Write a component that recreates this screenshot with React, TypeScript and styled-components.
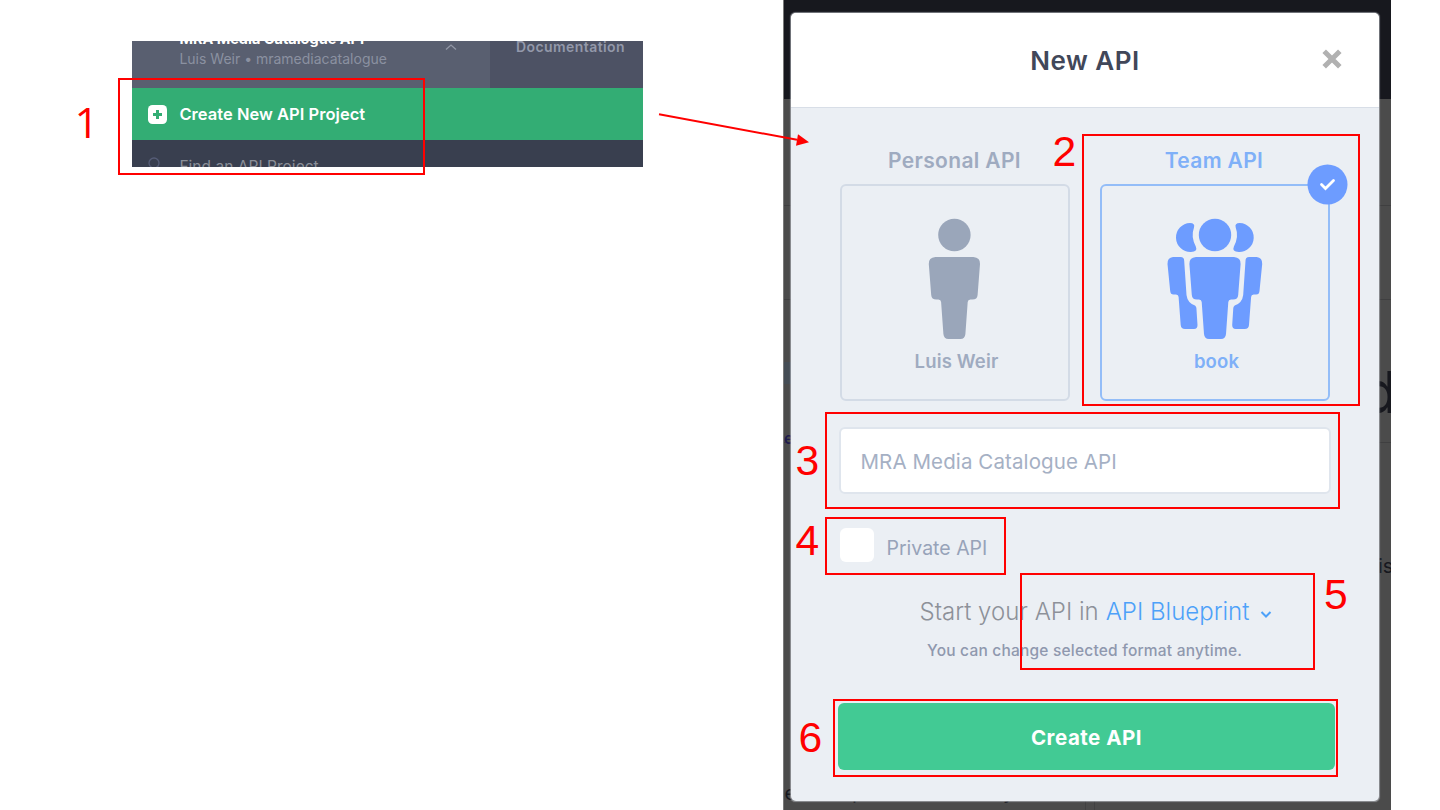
import React from "react";
import styled, { createGlobalStyle } from "styled-components";

const Global = createGlobalStyle`
  *, *::before, *::after { box-sizing: border-box; }
  body { margin: 0; background: #fff; font-family: Inter, "Liberation Sans", sans-serif; }
  h2, p { margin: 0; }
`;

const Slide = styled.main`
  position: relative;
  display: flex;
  align-items: flex-start;
  width: 1440px;
  height: 810px;
  overflow: hidden;
  background: #fff;
`;

/* ---------- Project menu ---------- */

const Menu = styled.section`
  display: flex;
  flex-direction: column;
  width: 511px;
  height: 126px;
  margin: 41px 139.600px 0 132.400px;
  overflow: hidden;
  flex: none;
`;

const MenuHeader = styled.div`
  display: flex;
  height: 47px;
  flex: none;
  overflow: hidden;
`;

const CurrentProject = styled.div`
  display: flex;
  justify-content: space-between;
  width: 357.600px;
  padding: 0 33px 0 47px;
  background: #595f70;
`;

const ProjectText = styled.div`
  display: flex;
  flex-direction: column;
  margin-top: -12.500px;
  white-space: nowrap;
`;

const ProjectName = styled.span`
  font-size: 14.5px;
  line-height: 20px;
  font-weight: 700;
  color: #fff;
`;

const ProjectOwner = styled.span`
  font-size: 14px;
  line-height: 20px;
  color: #8b91a1;
`;

const DocsTab = styled.div`
  flex: 1;
  padding: 0 0 0 26px;
  background: #4d5264;
`;

const DocsLabel = styled.span`
  display: block;
  width: max-content;
  margin-top: -4px;
  font-size: 14px;
  line-height: 20px;
  font-weight: 600;
  letter-spacing: 0.42px;
  color: #9398aa;
`;

const MenuItem = styled.div<{ $active?: boolean }>`
  display: flex;
  align-items: center;
  flex: none;
  height: 52px;
  padding-left: 16px;
  gap: 12px;
  font-size: ${(p) => (p.$active ? 16.5 : 15.5)}px;
  font-weight: ${(p) => (p.$active ? 600 : 400)};
  letter-spacing: 0.03px;
  color: ${(p) => (p.$active ? "#fff" : "#8b8f98")};
  background: ${(p) => (p.$active ? "#33ad74" : "#393f4f")};
  white-space: nowrap;
`;

const ItemIcon = styled.svg`
  width: 19px;
  height: 19px;
  flex: none;
`;

const Chevron = styled.svg`
  width: 12px;
  height: 12px;
  flex: none;
`;

const FormatChevron = styled(Chevron)`
  margin: 5px 0 0 4px;
`;

/* ---------- Dimmed page behind the dialog ---------- */

const Shot = styled.section`
  display: grid;
  width: 608px;
  height: 810px;
  overflow: hidden;
  flex: none;
`;

const Page = styled.div`
  position: relative;
  grid-area: 1 / 1;
  display: flex;
  flex-direction: column;
  background: #4b4b4b;
  overflow: hidden;
  border-left: 1px solid #7a7a7a;
`;

const TopBar = styled.div`
  height: 99px;
  background: #17181e;
  flex: none;
`;

const Band = styled.div<{ $h: number }>`
  height: ${(p) => p.$h}px;
  border-bottom: 1px solid #3f3f40;
  flex: none;
`;

const Highlight = styled.div`
  position: absolute;
  left: 0;
  top: 362px;
  width: 300px;
  height: 22px;
  background: #454d55;
`;

const Snippet = styled.span<{ $x: number; $base: number; $size: number; $w?: number; $c?: string }>`
  position: absolute;
  left: ${(p) => p.$x}px;
  top: ${(p) => p.$base - p.$size * 0.864}px;
  font-size: ${(p) => p.$size}px;
  line-height: 1;
  font-weight: ${(p) => p.$w ?? 400};
  color: ${(p) => p.$c ?? "#17181e"};
`;

const Footer = styled.div`
  display: flex;
  flex: 1;
  padding-left: 301px;
`;

const Gutter = styled.div`
  width: 10px;
  border: solid #414142;
  border-width: 0 1px;
`;

/* ---------- Dialog ---------- */

const Dialog = styled.div`
  position: relative;
  grid-area: 1 / 1;
  display: flex;
  flex-direction: column;
  width: 588px;
  height: 788px;
  margin: 13px 0 0 8px;
  border-radius: 5px;
  background: #ebeff4;
  overflow: hidden;
  box-shadow: 0 0 1px 0.5px rgba(190, 194, 200, 0.6);
`;

const DialogHeader = styled.header`
  display: grid;
  grid-template-columns: 94px 1fr 94px;
  align-items: center;
  justify-items: center;
  height: 95px;
  flex: none;
  background: #fff;
  border-bottom: 1px solid #d8dee7;
`;

const Title = styled.h2`
  grid-column: 2;
  margin-top: 2px;
  font-size: 26px;
  line-height: 32px;
  font-weight: 600;
  letter-spacing: 0.5px;
  color: #414759;
`;

const Close = styled.svg`
  width: 20px;
  height: 20px;
  margin-top: -3px;
`;

const Body = styled.div`
  display: flex;
  flex-direction: column;
  padding: 38px 44px 0 48px;
`;

const Owners = styled.div`
  display: flex;
  gap: 30px;
  margin-left: 1px;
`;

const Owner = styled.div<{ $on?: boolean }>`
  position: relative;
  display: flex;
  flex-direction: column;
  align-items: center;
  width: 230px;
  color: ${(p) => (p.$on ? "#7fb0f8" : "#9fabc0")};
`;

const OwnerLabel = styled.span<{ $shift?: number }>`
  height: 38px;
  padding-top: 1px;
  margin-left: ${(p) => p.$shift ?? 0}px;
  font-size: 21px;
  line-height: 28px;
  font-weight: 600;
  letter-spacing: 0.35px;
`;

const Card = styled.div<{ $on?: boolean }>`
  display: flex;
  flex-direction: column;
  align-items: center;
  width: 230px;
  height: 217px;
  padding-top: 32px;
  border: 2px solid ${(p) => (p.$on ? "#93bdf8" : "#d3dbe6")};
  border-radius: 6px;
`;

const Figure = styled.svg`
  width: 96px;
  height: 122px;
  flex: none;
`;

const CardName = styled.span`
  margin: 9px 0 0 3px;
  font-size: 18.5px;
  line-height: 24px;
  font-weight: 600;
  letter-spacing: 0.15px;
`;

const Badge = styled.svg`
  position: absolute;
  right: -18px;
  top: 18px;
  width: 41px;
  height: 41px;
`;

const NameField = styled.div`
  display: flex;
  align-items: center;
  width: 492px;
  height: 67px;
  margin-top: 26px;
  padding: 2px 0 0 19.500px;
  border: 2px solid #dfe5ed;
  border-radius: 6px;
  background: #fff;
  font-size: 20.5px;
  letter-spacing: 0.1px;
  color: #a5b0c4;
`;

const PrivateRow = styled.div`
  display: flex;
  align-items: center;
  gap: 12.500px;
  height: 34px;
  margin: 34px 0 0 1px;
`;

const CheckBox = styled.span`
  width: 34px;
  height: 34px;
  border-radius: 6px;
  background: #fff;
`;

const PrivateLabel = styled.span`
  padding-top: 5px;
  font-size: 19.5px;
  color: #97a3b9;
`;

const FormatRow = styled.div`
  display: flex;
  align-items: center;
  height: 32px;
  margin: 33px 0 0 80.500px;
  gap: 7px;
  font-size: 24px;
  font-weight: 300;
  color: #8d9199;
  white-space: nowrap;
`;

const FormatLink = styled.span`
  color: #4da1f9;
`;

const Hint = styled.p`
  margin: 13px 0 0 88px;
  font-size: 15.5px;
  line-height: 22px;
  font-weight: 500;
  letter-spacing: 0.21px;
  color: #8f98ae;
  white-space: nowrap;
`;

const Submit = styled.div`
  display: flex;
  align-items: center;
  justify-content: center;
  height: 67px;
  margin-top: 41px;
  margin-left: -1px;
  padding-top: 1px;
  border-radius: 6px;
  background: #42ca94;
  color: #fff;
  font-size: 20.5px;
  font-weight: 700;
  letter-spacing: 0.5px;
`;

/* ---------- Annotations ---------- */

const Mark = styled.div<{ $x: number; $y: number; $w: number; $h: number }>`
  position: absolute;
  left: ${(p) => p.$x}px;
  top: ${(p) => p.$y}px;
  width: ${(p) => p.$w}px;
  height: ${(p) => p.$h}px;
  border: 2px solid #f00;
`;

const Num = styled.span<{ $x: number; $base: number }>`
  position: absolute;
  left: ${(p) => p.$x}px;
  top: ${(p) => p.$base - 36}px;
  font-family: "Liberation Sans", Arial, sans-serif;
  font-size: 42.67px;
  line-height: 1;
  color: #f00;
`;

/* Open Sans has a "1" without a foot */
const NumOne = styled(Num)`
  margin-top: -2px;
  font-family: "Open Sans", sans-serif;
`;

const Arrow = styled.svg`
  position: absolute;
  left: 650px;
  top: 105px;
  width: 170px;
  height: 50px;
`;

const marks = [
  { n: 1, box: [118, 78, 307, 97], at: [74.5, 139] },
  { n: 2, box: [1082, 134, 278, 272], at: [1052.5, 166] },
  { n: 3, box: [824.7, 412, 515, 97], at: [795.5, 475] },
  { n: 4, box: [824.7, 517, 181, 58], at: [795.5, 555] },
  { n: 5, box: [1020, 573, 295, 97], at: [1324, 609] },
  { n: 6, box: [833, 698.5, 504.5, 78.5], at: [798.5, 752] },
];

const bodyPath =
  "M29 39H67Q73.9 39.5 73.6 46L71.2 77Q70.9 81.5 66 81.5H64Q61.5 81.8 61.3 84L59 116Q58.5 121 54 121H42Q37.5 121 37 116L34.7 84Q34.5 81.8 32 81.5H30Q25.1 81.5 24.8 77L22.4 46Q22.1 39.5 29 39Z";

const sideHead =
  "M23 5Q28.3 5 27 9.5Q23.6 18.5 28.8 28.5Q31 33.5 24 34A14.5 14.5 0 0 1 23 5Z";
const sideBody =
  "M6 39H13.5Q17.3 39 17.2 43L19.5 77Q20.5 85 28 87.5Q29.3 88.5 29.4 90L30.5 107Q30.5 111 27 111H18Q14 111 13.7 107L11.6 79Q11.5 76.500 9 76.5H6.5Q3.5 76.5 3.2 73L0.5 46Q0.3 39.5 6 39Z";

const Person = () => (
  <Figure viewBox="0.6 0 96 122" fill="#9aa6ba">
    <circle cx="48" cy="17" r="16.2" />
    <path d={bodyPath} />
  </Figure>
);

const Companion = () => (
  <>
    <path d={sideHead} />
    <path d={sideBody} />
  </>
);

const Team = () => (
  <Figure viewBox="0 0 96 122" fill="#6d9cff">
    <Companion />
    <g transform="translate(95.7 0) scale(-1 1)">
      <Companion />
    </g>
    <circle cx="48" cy="17" r="16.2" />
    <path d={bodyPath} />
  </Figure>
);

export default function App() {
  return (
    <>
      <Global />
      <Slide>
        <Menu>
          <MenuHeader>
            <CurrentProject>
              <ProjectText>
                <ProjectName>MRA Media Catalogue API</ProjectName>
                <ProjectOwner>Luis Weir • mramediacatalogue</ProjectOwner>
              </ProjectText>
              <Chevron viewBox="0 0 12 12" fill="none" stroke="#9297a6" strokeWidth="1.3">
                <path d="M1 8.5L6 4L11 8.5" />
              </Chevron>
            </CurrentProject>
            <DocsTab>
              <DocsLabel>Documentation</DocsLabel>
            </DocsTab>
          </MenuHeader>
          <MenuItem $active>
            <ItemIcon viewBox="0 0 19 19">
              <rect width="19" height="19" rx="4.5" fill="#fff" />
              <path d="M9.5 5V14M5 9.5H14" stroke="#33ad74" strokeWidth="3" />
            </ItemIcon>
            <span>Create New API Project</span>
          </MenuItem>
          <MenuItem>
            <ItemIcon viewBox="0 0 19 19" fill="none" stroke="#565d77" strokeWidth="1.3">
              <circle cx="6" cy="6" r="5" />
              <path d="M9.5 9.5L14 14" />
            </ItemIcon>
            <span>Find an API Project</span>
          </MenuItem>
        </Menu>

        <Shot>
          <Page>
            <TopBar />
            <Band $h={107} />
            <Band $h={94} />
            <Band $h={143} />
            <Footer>
              <Gutter />
            </Footer>
            <Highlight />
            <Snippet $x={0} $base={444} $size={16} $w={600} $c="#1f1c4d">e</Snippet>
            <Snippet $x={578} $base={413} $size={58} $w={500}>d</Snippet>
            <Snippet $x={594} $base={573} $size={20}>is</Snippet>
            <Snippet $x={0.5} $base={800} $size={20}>e</Snippet>
            <Snippet $x={68} $base={799} $size={20}>p</Snippet>
            <Snippet $x={219} $base={799} $size={20}>y</Snippet>
          </Page>
          <Dialog>
            <DialogHeader>
              <Title>New API</Title>
              <Close viewBox="0 0 20 20" stroke="#b1b1b1" strokeWidth="5">
                <path d="M2.2 2.2L17.8 17.8M17.8 2.2L2.2 17.8" />
              </Close>
            </DialogHeader>
            <Body>
              <Owners>
                <Owner>
                  <OwnerLabel $shift={-1}>Personal API</OwnerLabel>
                  <Card>
                    <Person />
                    <CardName>Luis Weir</CardName>
                  </Card>
                </Owner>
                <Owner $on>
                  <OwnerLabel $shift={-2}>Team API</OwnerLabel>
                  <Card $on>
                    <Team />
                    <CardName>book</CardName>
                  </Card>
                  <Badge viewBox="0 0 41 41">
                    <circle cx="20.5" cy="20.5" r="20" fill="#6d9cff" />
                    <path
                      d="M14.500 20.500L18.500 24.500L26.500 16.500"
                      fill="none"
                      stroke="#fff"
                      strokeWidth="2.800"
                      strokeLinecap="round"
                    />
                  </Badge>
                </Owner>
              </Owners>
              <NameField>
                <span>MRA Media Catalogue API</span>
              </NameField>
              <PrivateRow>
                <CheckBox />
                <PrivateLabel>Private API</PrivateLabel>
              </PrivateRow>
              <FormatRow>
                <span>Start your API in</span>
                <FormatLink>API Blueprint</FormatLink>
                <FormatChevron viewBox="0 0 12 12" fill="none" stroke="#4da1f9" strokeWidth="2">
                  <path d="M1.5 4L6 8.500L10.500 4" />
                </FormatChevron>
              </FormatRow>
              <Hint>You can change selected format anytime.</Hint>
              <Submit>Create API</Submit>
            </Body>
          </Dialog>
        </Shot>

        {marks.map(({ n, box, at }) => {
          const Digit = n === 1 ? NumOne : Num;
          return (
            <React.Fragment key={n}>
              <Mark $x={box[0]} $y={box[1]} $w={box[2]} $h={box[3]} />
              <Digit $x={at[0]} $base={at[1]}>{n}</Digit>
            </React.Fragment>
          );
        })}
        <Arrow viewBox="650 105 170 50">
          <path d="M659 114.3L797 139.8" stroke="#f00" strokeWidth="2" />
          <path d="M809 142.3L796 145.8L798 134.2Z" fill="#f00" />
        </Arrow>
      </Slide>
    </>
  );
}
